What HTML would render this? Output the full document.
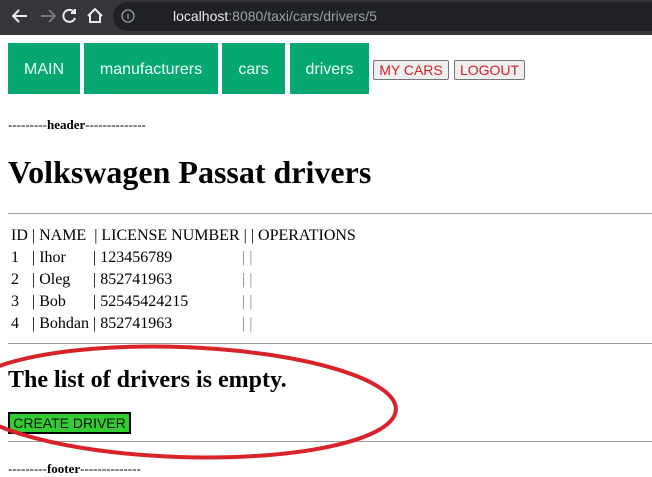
<!DOCTYPE html>
<html><head><style>
body{margin:0;width:652px;height:469px;overflow:hidden;background:#fff;position:relative;font-family:"Liberation Serif",serif}
.bar{position:absolute;left:0;top:0;width:652px;height:35px;background:#35363a}
.pill{position:absolute;left:113px;top:2px;width:560px;height:29px;border-radius:15px;background:#202124}
.url{position:absolute;left:173px;top:8px;font:14px "Liberation Sans",sans-serif;color:#9aa0a6}
.url b{font-weight:normal;color:#e8eaed}
.nav{position:absolute;top:43px;height:51px;background:#07a870;color:#e8fff4;font:16px "Liberation Sans",sans-serif;line-height:53px;text-align:center}
.btn{position:absolute;top:60px;height:18px;background:#efefef;border:1px solid #767676;border-radius:2px;color:#d0202a;font:14px "Liberation Sans",sans-serif;line-height:18px;text-align:center}
.t{position:absolute;font-size:16px;color:#000;white-space:pre}
hr{position:absolute;left:8px;width:652px;margin:0;border:0;border-top:1px solid #999}
</style></head><body>
<div class="bar"><div class="pill"></div>
<svg style="position:absolute;left:0;top:0" width="150" height="35"><g fill="none" stroke-width="2"><path d="M27 16H13M19 10l-6 6 6 6" stroke="#e8eaed"/><path d="M41 16h14M49 10l6 6-6 6" stroke="#777"/><path d="M74 12a6 6 0 1 0 1 6M75 9v4h-4" stroke="#e8eaed"/><path d="M88 16l7-7 7 7M90 14v8h10v-8" stroke="#e8eaed"/></g><circle cx="128" cy="16" r="6" fill="none" stroke="#9aa0a6" stroke-width="1.3"/><path d="M128 14v5" stroke="#9aa0a6" stroke-width="1.3"/></svg>
<div class="url"><b>localhost</b>:8080/taxi/cars/drivers/5</div></div>
<div class="nav" style="left:8px;width:72px">MAIN</div>
<div class="nav" style="left:84px;width:134px">manufacturers</div>
<div class="nav" style="left:222px;width:63px">cars</div>
<div class="nav" style="left:290px;width:79px">drivers</div>
<div class="btn" style="left:373px;width:74px">MY CARS</div>
<div class="btn" style="left:454px;width:69px">LOGOUT</div>
<div class="t" style="left:8px;top:117px;font-size:13px">---------<b>header</b>--------------</div>
<div class="t" style="left:8px;top:154px;font-size:32px;font-weight:bold">Volkswagen Passat drivers</div>
<hr style="top:213px">
<div class="t" style="left:11px;top:227px">ID | NAME  | LICENSE NUMBER | | OPERATIONS</div>
<div class="t" style="left:11px;top:249px">1</div><div class="t" style="left:32px;top:249px">| Ihor</div><div class="t" style="left:93px;top:249px">| 123456789</div><div class="t" style="left:242px;top:249px;color:#888">| |</div>
<div class="t" style="left:11px;top:271px">2</div><div class="t" style="left:32px;top:271px">| Oleg</div><div class="t" style="left:93px;top:271px">| 852741963</div><div class="t" style="left:242px;top:271px;color:#888">| |</div>
<div class="t" style="left:11px;top:293px">3</div><div class="t" style="left:32px;top:293px">| Bob</div><div class="t" style="left:93px;top:293px">| 52545424215</div><div class="t" style="left:242px;top:293px;color:#888">| |</div>
<div class="t" style="left:11px;top:315px">4</div><div class="t" style="left:32px;top:315px">| Bohdan</div><div class="t" style="left:93px;top:315px">| 852741963</div><div class="t" style="left:242px;top:315px;color:#888">| |</div>
<hr style="top:343px">
<div class="t" style="left:8px;top:367px;font-size:24px;font-weight:bold">The list of drivers is empty.</div>
<div style="position:absolute;left:8px;top:412px;width:119px;height:18px;background:#33cc33;border:2px solid #000;font:14px 'Liberation Sans',sans-serif;line-height:18px;text-align:center;color:#111">CREATE DRIVER</div>
<hr style="top:441px">
<div class="t" style="left:8px;top:461px;font-size:13px">---------<b>footer</b>--------------</div>
<svg style="position:absolute;left:0;top:0" width="652" height="469"><ellipse cx="180" cy="402" rx="216" ry="55" fill="none" stroke="#d8232a" stroke-width="4" transform="rotate(2 180 402)"/></svg>
</body></html>
